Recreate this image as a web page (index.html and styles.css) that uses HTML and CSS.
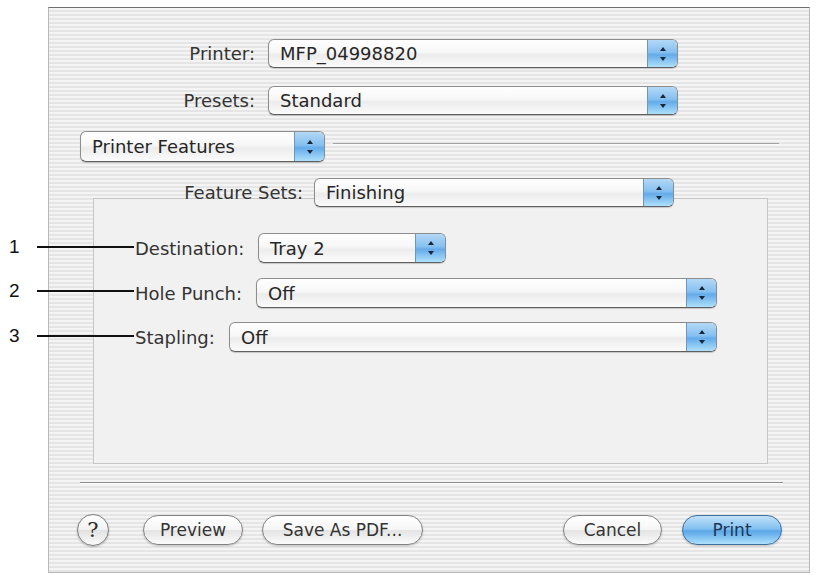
FILE: index.html
```html
<!DOCTYPE html>
<html>
<head>
  <title>Print</title>
  <link rel="stylesheet" href="styles.css">
</head>
<body>

<!-- callout numbers -->
<div class="callout callout-1"><span class="num">1</span><span class="lead"></span></div>
<div class="callout callout-2"><span class="num">2</span><span class="lead"></span></div>
<div class="callout callout-3"><span class="num">3</span><span class="lead"></span></div>

<div class="window">

  <div class="row row-printer">
    <label class="label">Printer:</label>
    <div class="popup">
      <span class="value">MFP_04998820</span>
      <span class="arrows"><svg width="8" height="18" viewBox="0 0 8 18"><path d="M4 2L7 6H1Z M1 12H7L4 16Z" fill="#17263a"/></svg></span>
    </div>
  </div>

  <div class="row row-presets">
    <label class="label">Presets:</label>
    <div class="popup">
      <span class="value">Standard</span>
      <span class="arrows"><svg width="8" height="18" viewBox="0 0 8 18"><path d="M4 2L7 6H1Z M1 12H7L4 16Z" fill="#17263a"/></svg></span>
    </div>
  </div>

  <div class="row row-panel">
    <div class="popup popup-panel">
      <span class="value">Printer Features</span>
      <span class="arrows"><svg width="8" height="18" viewBox="0 0 8 18"><path d="M4 2L7 6H1Z M1 12H7L4 16Z" fill="#17263a"/></svg></span>
    </div>
    <div class="rule"></div>
  </div>

  <div class="row row-sets">
    <label class="label">Feature Sets:</label>
    <div class="popup">
      <span class="value">Finishing</span>
      <span class="arrows"><svg width="8" height="18" viewBox="0 0 8 18"><path d="M4 2L7 6H1Z M1 12H7L4 16Z" fill="#17263a"/></svg></span>
    </div>
  </div>

  <!-- feature set box -->
  <div class="group">
    <div class="row row-dest">
      <label class="label">Destination:</label>
      <div class="popup">
        <span class="value">Tray 2</span>
        <span class="arrows"><svg width="8" height="18" viewBox="0 0 8 18"><path d="M4 2L7 6H1Z M1 12H7L4 16Z" fill="#17263a"/></svg></span>
      </div>
    </div>
    <div class="row row-punch">
      <label class="label">Hole Punch:</label>
      <div class="popup">
        <span class="value">Off</span>
        <span class="arrows"><svg width="8" height="18" viewBox="0 0 8 18"><path d="M4 2L7 6H1Z M1 12H7L4 16Z" fill="#17263a"/></svg></span>
      </div>
    </div>
    <div class="row row-staple">
      <label class="label">Stapling:</label>
      <div class="popup">
        <span class="value">Off</span>
        <span class="arrows"><svg width="8" height="18" viewBox="0 0 8 18"><path d="M4 2L7 6H1Z M1 12H7L4 16Z" fill="#17263a"/></svg></span>
      </div>
    </div>
  </div>

  <div class="separator"></div>

  <div class="buttons">
    <button class="help">?</button>
    <button class="btn btn-preview">Preview</button>
    <button class="btn btn-pdf">Save As PDF...</button>
    <button class="btn btn-cancel">Cancel</button>
    <button class="btn btn-print">Print</button>
  </div>

</div>

</body>
</html>
```

FILE: styles.css
```css
body {
  margin: 0;
  background: white;
  font-family: "DejaVu Sans", sans-serif;
  font-size: 18px;
  color: #333;
  position: relative;
}

/* callouts */
.callout {
  position: absolute;
  left: 0;
  height: 20px;
  display: flex;
  align-items: center;
  z-index: 2;
}

.callout .num {
  width: 37px;
  padding-left: 9px;
  box-sizing: border-box;
  font-family: "Liberation Sans", Arial, sans-serif;
  font-size: 19px;
  color: #111;
}

.callout .lead {
  width: 97px;
  height: 2px;
  background: #111;
}

.callout-1 { top: 237px; }
.callout-2 { top: 281px; }
.callout-3 { top: 326px; }

/* window */
.window {
  margin: 7px 0 0 48px;
  width: 762px;
  height: 566px;
  box-sizing: border-box;
  border: 1px solid #b9b9b9;
  border-top-color: #6f6f6f;
  background: repeating-linear-gradient(to bottom, #f4f4f4 0, #f4f4f4 2px, #e5e5e5 2px, #e5e5e5 4px);
  overflow: hidden;
}

.row {
  display: flex;
  align-items: center;
}

.label {
  flex: none;
  white-space: nowrap;
}

.row-printer, .row-presets {
  height: 29px;
}

.row-printer { margin-top: 31px; }
.row-presets { margin-top: 18px; }

.row-printer .label, .row-presets .label {
  width: 206px;
  margin-right: 13px;
  text-align: right;
}

.row-printer .popup, .row-presets .popup {
  width: 410px;
}

.row-panel {
  margin-top: 16px;
  height: 31px;
  padding-left: 31px;
}

.popup-panel {
  width: 245px;
}

.rule {
  width: 446px;
  height: 1px;
  margin-left: 8px;
  margin-bottom: 6px;
  background: #a3a3a3;
  border-bottom: 1px solid #fbfbfb;
}

.row-sets {
  margin-top: 16px;
  height: 29px;
  position: relative;
  z-index: 1;
}

.row-sets .label {
  width: 254px;
  margin-right: 11px;
  text-align: right;
}

.row-sets .popup {
  width: 360px;
}

/* popup buttons */
.popup {
  flex: none;
  display: flex;
  height: 100%;
  box-sizing: border-box;
  border: 1px solid #8d8d8d;
  border-bottom-color: #5f5f5f;
  border-radius: 6px;
  background: linear-gradient(to bottom, #ffffff, #f7f7f7 45%, #ececec 55%, #fbfbfb);
  box-shadow: 0 1px 1px rgba(0,0,0,0.18);
  overflow: hidden;
}

.popup .value {
  flex: 1;
  padding-left: 11px;
  display: flex;
  align-items: center;
  color: #262626;
  white-space: nowrap;
}

.popup .arrows {
  width: 29px;
  display: flex;
  align-items: center;
  justify-content: center;
  border-left: 1px solid #6b98c2;
  background: linear-gradient(to bottom, #b3d8f6, #86c0f0 45%, #64abe9 55%, #aee0fb);
}

/* group box */
.group {
  margin: -9px 0 0 44px;
  width: 675px;
  height: 266px;
  box-sizing: border-box;
  border: 1px solid #c6c6c6;
  background: #f1f1f1;
  overflow: hidden;
}

.group .row {
  height: 30px;
  padding-left: 41px;
}

.row-dest { margin-top: 34px; }
.row-punch { margin-top: 15px; }
.row-staple { margin-top: 14px; }

.row-dest .label { width: 123px; }
.row-dest .popup { width: 188px; }
.row-punch .label { width: 121px; }
.row-punch .popup { width: 461px; }
.row-staple .label { width: 94px; }
.row-staple .popup { width: 488px; }

.separator {
  margin: 18px 0 0 31px;
  width: 703px;
  height: 1px;
  background: #8f8f8f;
  border-bottom: 1px solid #fafafa;
}

/* bottom buttons */
.buttons {
  margin-top: 31px;
  height: 30px;
  padding: 0 27px 0 28px;
  display: flex;
  align-items: center;
}

button {
  font-family: "DejaVu Sans", sans-serif;
  font-size: 17px;
  color: #333;
  padding: 0;
  cursor: pointer;
}

.help {
  width: 32px;
  height: 32px;
  border-radius: 50%;
  border: 1px solid #7d7d7d;
  background: linear-gradient(to bottom, #ffffff, #f1f1f1 50%, #e2e2e2 51%, #fafafa);
  box-shadow: 0 1px 2px rgba(0,0,0,0.25);
  font-family: "DejaVu Serif", serif;
  font-size: 21px;
  color: #2a2a2a;
}

.btn {
  height: 30px;
  border-radius: 15px;
  border: 1px solid #838383;
  background: linear-gradient(to bottom, #ffffff, #f6f6f6 48%, #e4e4e4 52%, #fbfbfb);
  box-shadow: 0 1px 2px rgba(0,0,0,0.22);
}

.btn-preview { width: 100px; margin-left: 34px; }
.btn-pdf { width: 161px; margin-left: 19px; }
.btn-cancel { width: 99px; margin-left: auto; }

.btn-print {
  width: 100px;
  margin-left: 20px;
  border-color: #3f6f9e;
  color: #1c3656;
  background: linear-gradient(to bottom, #c2e2fa, #82c0f0 46%, #5aa6e8 54%, #aee0fc);
}
```
